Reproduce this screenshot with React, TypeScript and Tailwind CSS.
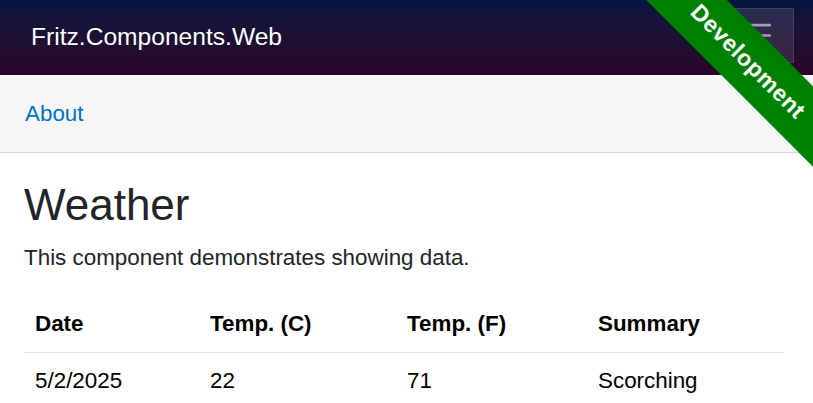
import React from 'react';

interface Forecast {
  date: string;
  tempC: number;
  tempF: number;
  summary: string;
}

const forecasts: Forecast[] = [
  { date: '5/2/2025', tempC: 22, tempF: 71, summary: 'Scorching' },
];

const Ribbon: React.FC = () => (
  <div className="absolute top-0 right-0 w-[200px] h-[200px] overflow-hidden pointer-events-none">
    <div className="absolute left-[-15px] top-[33px] w-[300px] h-[57px] rotate-45 bg-[#008000] flex items-center justify-center">
      <span className="text-white font-bold text-[23px] tracking-[0.6px] leading-none">Development</span>
    </div>
  </div>
);

const App: React.FC = () => {
  return (
    <div className="relative min-h-[403px] bg-white text-[#212529] font-['Liberation_Sans',Arial,sans-serif] text-[22.4px] leading-[1.5]">
      <header className="relative h-[75px] bg-gradient-to-b from-[#03173e] to-[#2a0528] flex items-center pl-[31px]">
        <span className="text-white text-[24.6px] leading-none">Fritz.Components.Web</span>
        <button className="absolute top-[8px] right-[19px] w-[78px] h-[55px] border border-white/10 bg-white/10 flex items-center justify-center">
          <svg width="39" height="39" viewBox="0 0 30 30">
            <path d="M4 7h22M4 15h22M4 23h22" stroke="rgba(255,255,255,0.55)" strokeWidth="2" strokeLinecap="round" />
          </svg>
        </button>
      </header>

      <div className="h-[78px] bg-[#f7f7f7] border-b border-[#d6d5d5] flex items-center px-[25px]">
        <a href="#" className="text-[#0071c1]">About</a>
      </div>

      <main className="pl-[24px] pr-[29px] pt-[26px]">
        <h1 className="text-[44px] leading-[1.2] mb-[9px]">Weather</h1>
        <p className="mb-[22px]">This component demonstrates showing data.</p>

        <table className="w-full border-collapse text-left">
          <thead>
            <tr className="border-b border-[#dee2e6]">
              <th className="w-[175px] px-[11px] py-[11px] font-bold text-black">Date</th>
              <th className="w-[197px] px-[11px] py-[11px] font-bold text-black">Temp. (C)</th>
              <th className="w-[191px] px-[11px] py-[11px] font-bold text-black">Temp. (F)</th>
              <th className="px-[11px] py-[11px] font-bold text-black">Summary</th>
            </tr>
          </thead>
          <tbody>
            {forecasts.map((f) => (
              <tr key={f.date} className="border-b border-[#dee2e6]">
                <td className="px-[11px] py-[11px] text-black">{f.date}</td>
                <td className="px-[11px] py-[11px] text-black">{f.tempC}</td>
                <td className="px-[11px] py-[11px] text-black">{f.tempF}</td>
                <td className="px-[11px] py-[11px] text-black">{f.summary}</td>
              </tr>
            ))}
          </tbody>
        </table>
      </main>

      <Ribbon />
    </div>
  );
};

export default App;
